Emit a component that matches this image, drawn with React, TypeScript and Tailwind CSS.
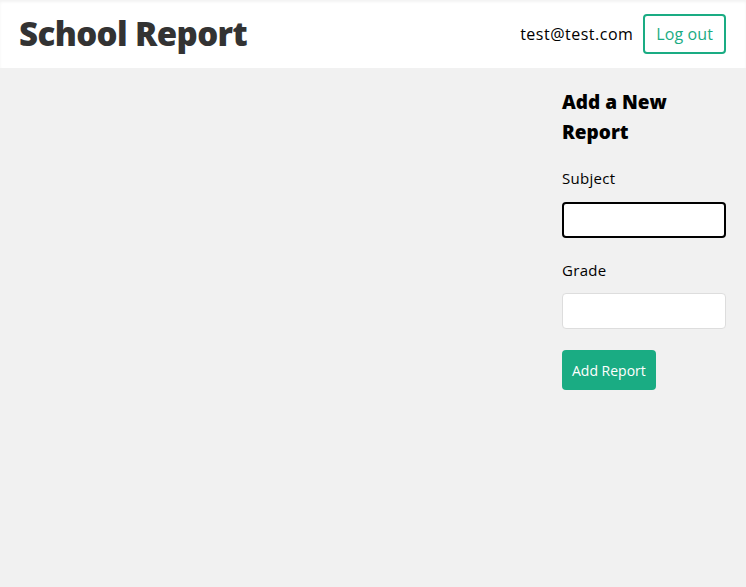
import React from 'react';

const font = { fontFamily: '"Open Sans", "Noto Sans", sans-serif' };

const App = () => {
  return (
    <div className="min-h-screen bg-[#f1f1f1] text-[#333]" style={font}>
      {/* Navbar */}
      <header className="bg-white shadow-[inset_0_2px_3px_rgba(0,0,0,0.05)]">
        <div className="h-[68px] pl-[19px] pr-5 flex items-center justify-between">
          <h1 className="text-[33px] font-extrabold tracking-[-0.6px] text-[#333]">School Report</h1>
          <nav className="flex items-center gap-[10px]">
            <span className="text-[16px] tracking-[0.5px] text-black">test@test.com</span>
            <button className="h-[40px] px-[11px] border-2 border-[#1aac83] rounded-[4px] text-[16px] tracking-[0.1px] text-[#1aac83] bg-white">
              Log out
            </button>
          </nav>
        </div>
      </header>

      {/* Page */}
      <div className="grid grid-cols-[1fr_164px] gap-[100px] px-5">
        <div></div>
        <form className="pt-[19px]" onSubmit={(e) => e.preventDefault()}>
          <h3 className="text-[19px] leading-[30px] font-extrabold text-black">Add a New Report</h3>
          <label className="block mt-[19px] text-[15px] leading-6 tracking-[0.3px] text-black">Subject</label>
          <input
            type="text"
            className="block w-full h-[36px] mt-3 mb-5 px-[10px] bg-white border-2 border-black rounded-[4px] outline-none"
          />
          <label className="block text-[15px] leading-6 tracking-[0.3px] text-black">Grade</label>
          <input
            type="text"
            className="block w-full h-[36px] mt-[11px] mb-[21px] px-[10px] bg-white border border-[#ddd] rounded-[4px] outline-none"
          />
          <button className="h-[40px] px-[10px] bg-[#1aac83] text-white text-[14px] rounded-[4px]">
            Add Report
          </button>
        </form>
      </div>
    </div>
  );
};

export default App;
